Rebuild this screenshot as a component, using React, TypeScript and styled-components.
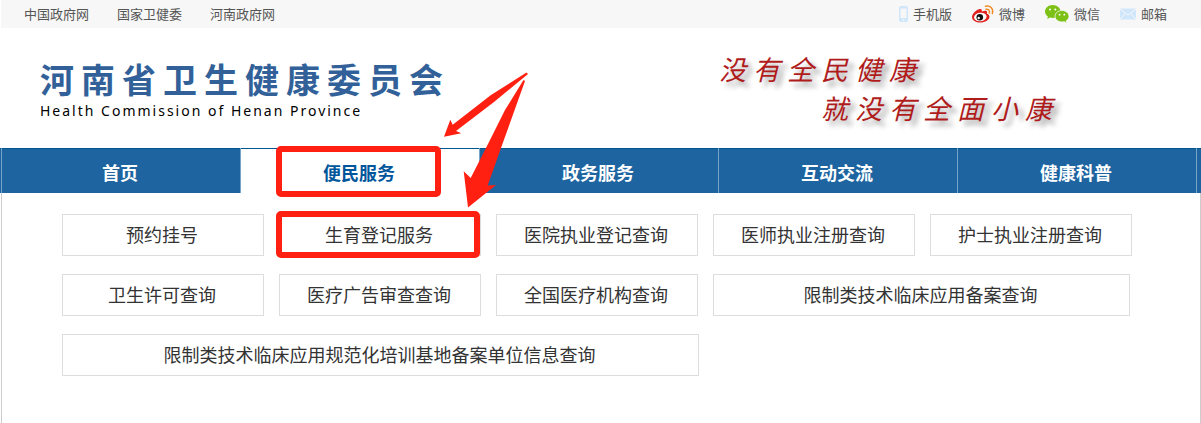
import React from "react";
import styled, { createGlobalStyle, css } from "styled-components";

const sans = `"Noto Sans CJK SC", sans-serif`;
const marker = "#ff2012";

const GlobalStyle = createGlobalStyle`
  * { box-sizing: border-box; }
  body { margin: 0; background: #fff; font-family: ${sans}; overflow-x: hidden; }
  ul, h1, p { margin: 0; padding: 0; }
  ul { list-style: none; }
  a { color: inherit; text-decoration: none; }
`;

const Page = styled.div`
  min-height: 100vh;
  display: flex;
  flex-direction: column;
`;

const TopBar = styled.div`
  display: flex;
  justify-content: space-between;
  align-items: center;
  height: 28px;
  margin-left: 1px;
  padding: 0 34px 0 23px;
  background: #f7f7f7;
  color: #555;
  font-size: 13px;
  line-height: 26px;
`;

const LinkList = styled.ul`
  display: flex;
  gap: 28px;
`;

const ToolList = styled.ul`
  display: flex;
  gap: 20px;
`;

const ToolLink = styled.a`
  display: flex;
  align-items: center;
  gap: 5px;
  svg { display: block; }
`;

const Header = styled.header`
  display: flex;
  justify-content: space-between;
  height: 120px;
  padding: 21px 142px 0 40px;
`;

const Title = styled.h1`
  margin-top: 7px;
  color: #326199;
  font-size: 34px;
  font-weight: 700;
  line-height: 46px;
  letter-spacing: 7px;
`;

const Subtitle = styled.p`
  color: #000;
  font-family: "Noto Sans", sans-serif;
  font-size: 14px;
  line-height: 18px;
  letter-spacing: 2px;
`;

const Slogan = styled.p`
  color: #b01c1c;
  font-size: 27px;
  font-style: italic;
  line-height: 39px;
  letter-spacing: 7px;
  text-shadow: 5px 5px 5px rgba(0, 0, 0, 0.35);
  span { display: block; }
  span + span { padding-left: 102px; }
`;

const Nav = styled.nav`
  padding: 0 4px 0 1px;
  background: #1d64a0;
  box-shadow: inset 0 1px #00568f;
`;

const NavList = styled.ul`
  display: flex;
  border-left: 1px solid #76a3c8;
`;

const NavItem = styled.li`
  position: relative;
  flex: 1;
  height: 45px;
  border-right: 1px solid #76a3c8;
`;

const NavLink = styled.a<{ $active?: boolean }>`
  display: block;
  height: 45px;
  padding-right: 2px;
  color: #fff;
  font-size: 18px;
  font-weight: 700;
  line-height: 48px;
  text-align: center;
  ${(p) => p.$active && css`
    border-top: 1px solid #00568f;
    background: #fff;
    color: #00569b;
    line-height: 46px;
  `}
`;

const MarkerBox = styled.span<{ $inset: string }>`
  position: absolute;
  inset: ${(p) => p.$inset};
  z-index: 1;
  border: 6px solid ${marker};
  border-radius: 5px;
  pointer-events: none;
`;

const Arrows = styled.svg`
  position: absolute;
  top: -78px;
  left: 199px;
  z-index: 2;
  pointer-events: none;
`;

const Panel = styled.main`
  flex: 1;
  margin-left: 1px;
  padding: 21px 60px 47px;
  border: solid #ccc;
  border-width: 0 1px;
`;

const ServiceList = styled.ul`
  display: flex;
  flex-wrap: wrap;
  gap: 18px 15px;
`;

const widths = { normal: 202, wide: 417, full: 637 };

const ServiceLink = styled.a<{ $size: keyof typeof widths }>`
  position: relative;
  display: block;
  width: ${(p) => widths[p.$size]}px;
  height: 42px;
  padding-right: 2px;
  border: 1px solid #ddd;
  color: #333;
  font-size: 18px;
  line-height: 38px;
  text-align: center;
`;

const PhoneIcon = () => (
  <svg width="9" height="16" viewBox="0 0 9 16" aria-hidden="true">
    <rect x="0.5" y="0.5" width="8" height="15" rx="1.5" fill="#cfe6fb" stroke="#cfe6fb" />
    <path d="M1.500 2.500h6v9.500h-6z" fill="#f7f7f7" />
    <circle cx="4.5" cy="13.8" r="0.9" fill="#f7f7f7" />
  </svg>
);

const WeiboIcon = () => (
  <svg width="22" height="18" viewBox="0 0 22 18" aria-hidden="true">
    <path d="M0 12C0 8.500 5.500 3.500 8.500 4c2 .3 1.200 2.500 1.200 2.500s4.500-2 5.300.2c.4 1.100-.2 2-.2 2s3 .6 2.700 3.300C17.100 15 13 17.500 8.500 17.500S0 15.500 0 12z" fill="#e0211c" />
    <ellipse cx="8.300" cy="12" rx="6.300" ry="4.200" fill="#fff" transform="rotate(-6 8.300 12)" />
    <circle cx="7.800" cy="12.200" r="3.300" fill="#111" />
    <circle cx="6.700" cy="13" r="1.200" fill="#fff" />
    <path d="M14 4.200c2.500-.4 4 1.300 3.300 3.800M13.500 1.300c5-1.200 8.300 2.700 6.800 7.200" fill="none" stroke="#f28c28" strokeWidth="1.500" strokeLinecap="round" />
  </svg>
);

const WechatIcon = () => (
  <svg width="24" height="18" viewBox="0 0 24 18" aria-hidden="true">
    <path d="M7.800 0C3.500 0 0 2.900 0 6.500c0 2 1.100 3.800 2.900 5L2.200 14l2.900-1.500c.9.300 1.800.4 2.700.4 4.300 0 7.800-2.900 7.800-6.400S12.100 0 7.800 0z" fill="#7dc116" />
    <path d="M17 5.500c-3.900 0-7 2.600-7 5.800S13.100 17 17 17c.8 0 1.600-.1 2.300-.3l2.500 1.300-.6-2.200c1.700-1.100 2.800-2.700 2.800-4.500 0-3.200-3.100-5.800-7-5.800z" fill="#7dc116" stroke="#f7f7f7" strokeWidth="0.800" />
    <g fill="#fff"><circle cx="5" cy="4.500" r="1" /><circle cx="10.300" cy="4.500" r="1" /><circle cx="14.600" cy="9.700" r="0.900" /><circle cx="19.300" cy="9.700" r="0.900" /></g>
  </svg>
);

const MailIcon = () => (
  <svg width="16" height="12" viewBox="0 0 16 12" aria-hidden="true">
    <path d="M0 .5h16v11H0z" fill="#cfe6fb" />
    <path d="M0 1l8 6 8-6M0 11l5.500-5.500M16 11l-5.500-5.500" fill="none" stroke="#f7f7f7" />
  </svg>
);

const siteLinks = ["中国政府网", "国家卫健委", "河南政府网"];
const tools = [
  { label: "手机版", icon: <PhoneIcon /> },
  { label: "微博", icon: <WeiboIcon /> },
  { label: "微信", icon: <WechatIcon /> },
  { label: "邮箱", icon: <MailIcon /> },
];
const sections = ["首页", "便民服务", "政务服务", "互动交流", "健康科普"];
const activeSection = "便民服务";
const services: { label: string; size?: keyof typeof widths; marked?: boolean }[] = [
  { label: "预约挂号" },
  { label: "生育登记服务", marked: true },
  { label: "医院执业登记查询" },
  { label: "医师执业注册查询" },
  { label: "护士执业注册查询" },
  { label: "卫生许可查询" },
  { label: "医疗广告审查查询" },
  { label: "全国医疗机构查询" },
  { label: "限制类技术临床应用备案查询", size: "wide" },
  { label: "限制类技术临床应用规范化培训基地备案单位信息查询", size: "full" },
];

export default function App() {
  return (
    <Page>
      <GlobalStyle />
      <TopBar>
        <LinkList>
          {siteLinks.map((label) => <li key={label}><a href="#">{label}</a></li>)}
        </LinkList>
        <ToolList>
          {tools.map(({ label, icon }) => (
            <li key={label}><ToolLink href="#">{icon}{label}</ToolLink></li>
          ))}
        </ToolList>
      </TopBar>
      <Header>
        <div>
          <Title>河南省卫生健康委员会</Title>
          <Subtitle>Health Commission of Henan Province</Subtitle>
        </div>
        <Slogan><span>没有全民健康</span><span>就没有全面小康</span></Slogan>
      </Header>
      <Nav>
        <NavList>
          {sections.map((label) => (
            <NavItem key={label}>
              <NavLink href="#" $active={label === activeSection}>{label}</NavLink>
              {label === activeSection && (
                <>
                  <MarkerBox $inset="-2px 38px -4px 35px" />
                  <Arrows width="92" height="142" viewBox="440 70 92 142" fill={marker} aria-hidden="true">
                    <path d="M526.500 72.500L491 95L452.700 124.700L450.300 119.700L444 136.700L461.300 133.300L456 131L494 102L528 74Z" />
                    <path d="M523.500 80L505 110L488 144L470.700 178L463.700 171.300L468 207.500L496 185L487.700 185.500L501 148L525 81Z" />
                  </Arrows>
                </>
              )}
            </NavItem>
          ))}
        </NavList>
      </Nav>
      <Panel>
        <ServiceList>
          {services.map(({ label, size = "normal", marked }) => (
            <li key={label}>
              <ServiceLink href="#" $size={size}>
                {label}
                {marked && <MarkerBox $inset="-4px 0 -3px -4px" />}
              </ServiceLink>
            </li>
          ))}
        </ServiceList>
      </Panel>
    </Page>
  );
}
